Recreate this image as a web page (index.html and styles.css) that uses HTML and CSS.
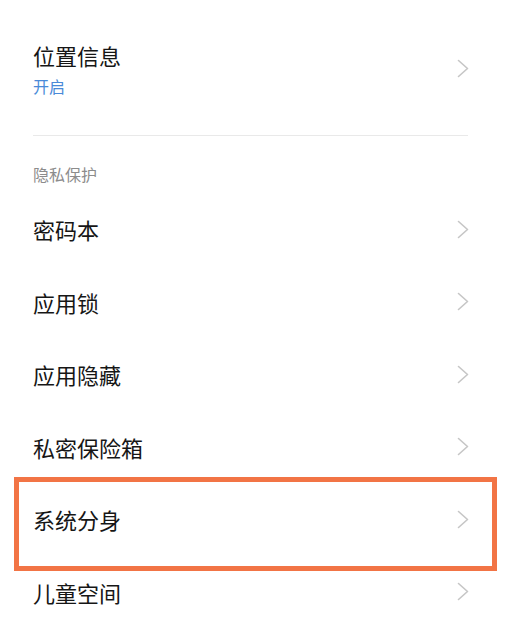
FILE: index.html
```html
<!DOCTYPE html>
<html lang="zh-CN">
<head>
<meta charset="utf-8">
<title>隐私设置</title>
<link rel="stylesheet" href="styles.css">
</head>
<body>
<div class="page">
  <div class="cut-row">权限管理</div>

  <div class="row row-double">
    <div class="row-text">
      <div class="title">位置信息</div>
      <div class="sub">开启</div>
    </div>
    <svg class="chev" viewBox="0 0 12 19" width="12" height="19"><polyline points="1.5,1.5 10.5,9.5 1.5,17.5"/></svg>
  </div>

  <div class="divider"></div>

  <div class="section">隐私保护</div>

  <div class="row"><div class="title">密码本</div><svg class="chev" viewBox="0 0 12 19" width="12" height="19"><polyline points="1.5,1.5 10.5,9.5 1.5,17.5"/></svg></div>
  <div class="row"><div class="title">应用锁</div><svg class="chev" viewBox="0 0 12 19" width="12" height="19"><polyline points="1.5,1.5 10.5,9.5 1.5,17.5"/></svg></div>
  <div class="row"><div class="title">应用隐藏</div><svg class="chev" viewBox="0 0 12 19" width="12" height="19"><polyline points="1.5,1.5 10.5,9.5 1.5,17.5"/></svg></div>
  <div class="row"><div class="title">私密保险箱</div><svg class="chev" viewBox="0 0 12 19" width="12" height="19"><polyline points="1.5,1.5 10.5,9.5 1.5,17.5"/></svg></div>
  <div class="row highlighted"><div class="title">系统分身</div><svg class="chev" viewBox="0 0 12 19" width="12" height="19"><polyline points="1.5,1.5 10.5,9.5 1.5,17.5"/></svg><div class="mark"></div></div>
  <div class="row"><div class="title">儿童空间</div><svg class="chev" viewBox="0 0 12 19" width="12" height="19"><polyline points="1.5,1.5 10.5,9.5 1.5,17.5"/></svg></div>
</div>
</body>
</html>
```

FILE: styles.css
```css
html, body {
  margin: 0;
  padding: 0;
  background: #ffffff;
}

body {
  font-family: "Noto Sans CJK SC", "Noto Sans", sans-serif;
  color: #161616;
  width: 511px;
  height: 631px;
  overflow: hidden;
}

.page {
  display: flex;
  flex-direction: column;
}

.cut-row {
  margin-top: -28px;
  height: 30px;
  line-height: 30px;
  font-size: 22px;
  padding-left: 33px;
  color: #161616;
}

.row {
  position: relative;
  display: flex;
  align-items: center;
  justify-content: space-between;
  height: 72.5px;
  padding: 0 43px 0 33px;
}

.row-double {
  height: auto;
  padding-top: 38px;
}

.row-text {
  display: flex;
  flex-direction: column;
  gap: 5px;
}

.title {
  font-size: 22px;
  line-height: 30px;
  color: #161616;
}

.sub {
  font-size: 16px;
  line-height: 22px;
  color: #4a8ad8;
}

.chev {
  display: block;
  flex: none;
  margin-right: -1px;
}

.chev polyline {
  fill: none;
  stroke: #c6c6c6;
  stroke-width: 1.6;
  stroke-linecap: round;
  stroke-linejoin: round;
}

.divider {
  height: 1px;
  background: #e9e9e9;
  margin: 38px 43px 0 33px;
}

.section {
  font-size: 16px;
  line-height: 22px;
  color: #8c8c8c;
  padding: 27px 0 8px 33px;
}

.mark {
  position: absolute;
  left: 14px;
  right: 14px;
  top: -6px;
  height: 94px;
  box-sizing: border-box;
  border: 5px solid #f27445;
  pointer-events: none;
}
```
